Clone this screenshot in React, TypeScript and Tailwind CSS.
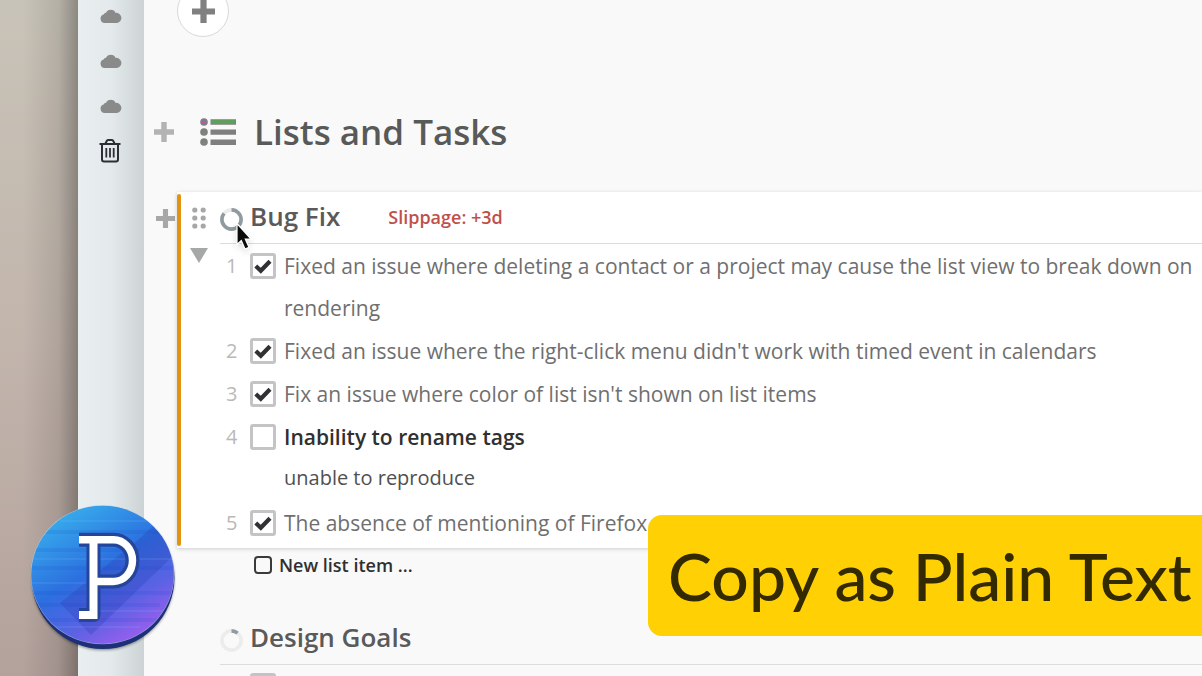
import React, { useState } from 'react';

interface ListItem {
  id: number;
  text: string;
  note?: string;
  done: boolean;
}

const initialItems: ListItem[] = [
  {
    id: 1,
    text: 'Fixed an issue where deleting a contact or a project may cause the list view to break down on rendering',
    done: true,
  },
  { id: 2, text: "Fixed an issue where the right-click menu didn't work with timed event in calendars", done: true },
  { id: 3, text: "Fix an issue where color of list isn't shown on list items", done: true },
  { id: 4, text: 'Inability to rename tags', note: 'unable to reproduce', done: false },
  { id: 5, text: 'The absence of mentioning of Firefox', done: true },
];

const CloudIcon = () => (
  <svg viewBox="0 0 22 14" className="w-[22px] h-[14px]" fill="#8a8a8a">
    <path d="M4.600 14A4.300 4.300 0 0 1 3.600 5.600 3.200 3.200 0 0 1 6 3.800 5.200 5.200 0 0 1 15.600 3.900 5 5 0 0 1 17 14z" />
  </svg>
);

const TrashIcon = () => (
  <svg viewBox="0 0 22 24" className="w-[22px] h-6" fill="none" stroke="#2c3035" strokeWidth="2">
    <path d="M0.500 5h21M3 5v15.500a2 2 0 0 0 2 2h12a2 2 0 0 0 2-2V5M6.500 4.500l1.200-2.500a1.500 1.500 0 0 1 1.300-.9h4a1.500 1.500 0 0 1 1.300.9l1.200 2.500" />
    <path d="M7.300 9v9.500M11 9v9.500M14.700 9v9.500" strokeWidth="1.800" />
  </svg>
);

const PlusIcon = ({ className }: { className: string }) => (
  <svg viewBox="0 0 20 20" className={className} fill="currentColor">
    <path d="M7.300 0h5.400v7.300H20v5.400h-7.300V20H7.300v-7.300H0V7.300h7.300z" />
  </svg>
);

const BulletsIcon = () => (
  <svg viewBox="0 0 36 28" className="w-9 h-7" fill="#7f7f7f">
    <circle cx="4" cy="4" r="3.800" />
    <circle cx="4" cy="14" r="3.800" />
    <circle cx="4" cy="24" r="3.800" />
    <path d="M10.500 1.300H36v5.400H10.500zM10.500 11.400H36v5.400H10.500zM10.500 21.500H36v5.400H10.500z" />
    <path d="M11.500 4h24" stroke="#3fc03f" strokeWidth="4" strokeDasharray="1 1" />
    <path d="M2 4.500h4" stroke="#c74fc0" strokeWidth="2" />
    <path d="M3 15.500h2.500M3 25.500h2.500" stroke="#4fae4f" strokeWidth="1.500" />
  </svg>
);

const DragHandleIcon = () => (
  <svg viewBox="0 0 14 22" className="w-[14px] h-[22px]" fill="#a6a8a8">
    {[3, 11, 19].map(y => (
      <g key={y}>
        <circle cx="2.800" cy={y} r="2.600" />
        <circle cx="11.200" cy={y} r="2.600" />
      </g>
    ))}
  </svg>
);

const ProgressRing = ({ percent }: { percent: number }) => (
  <svg viewBox="0 0 23 23" className="w-[23px] h-[23px] mt-[6px]" fill="none" strokeWidth="3.600">
    <circle cx="11.500" cy="11.500" r="9.600" stroke="#ececec" />
    <circle
      cx="11.500"
      cy="11.500"
      r="9.600"
      stroke="#909ba1"
      pathLength="100"
      strokeDasharray={`${percent} 100`}
      transform="rotate(-90 11.500 11.500)"
    />
  </svg>
);

const CursorIcon = () => (
  <svg viewBox="0 0 18 30" className="w-[18px] h-[30px] drop-shadow-md">
    <path
      d="M1 1.500v21l4.300-4 3.700 8.500 4-1.700-3.700-8.300h5.700z"
      fill="#0b0b0b"
      stroke="#fff"
      strokeWidth="1.200"
    />
  </svg>
);

const AppLogo = () => (
  <svg viewBox="0 0 146 148" className="w-[146px] h-[148px]">
    <defs>
      <linearGradient id="disc" x1="0.200" y1="0" x2="0.800" y2="1">
        <stop offset="0" stopColor="#38b2ec" />
        <stop offset="0.450" stopColor="#2c6fe0" />
        <stop offset="0.720" stopColor="#5b62e4" />
        <stop offset="1" stopColor="#a95df0" />
      </linearGradient>
      <clipPath id="discClip">
        <ellipse cx="72.500" cy="69.700" rx="71.200" ry="69" />
      </clipPath>
      <filter id="discShadow" x="-10%" y="-10%" width="120%" height="120%">
        <feGaussianBlur stdDeviation="1.500" />
      </filter>
    </defs>
    <circle cx="73" cy="74" r="71" fill="#000" opacity="0.450" filter="url(#discShadow)" />
    <circle cx="73" cy="72.500" r="71.500" fill="#1d2f78" />
    <ellipse cx="72.500" cy="69.700" rx="71.800" ry="69.600" fill="#b9d4f4" opacity="0.700" />
    <ellipse cx="72.500" cy="69.700" rx="71.200" ry="69" fill="url(#disc)" />
    <g clipPath="url(#discClip)">
      <path d="M30 98L61 130 146 48V0L108 35z" fill="#2b3bb0" opacity="0.280" />
      <path d="M0 27h146M0 45h110M0 63h146M0 88h146M0 100h130M10 115h130" stroke="#1747c0" strokeWidth="4" opacity="0.120" />
      <path d="M30 16h90M0 54h146M0 78h60M70 106h76M20 122h90" stroke="#7fc4ff" strokeWidth="2" opacity="0.130" />
    </g>
    <g fill="none">
      <path
        d="M49 34.700H83.500A19 20.900 0 0 1 83.500 76.500H64M63.500 34.700V110H49"
        stroke="#24459a"
        strokeWidth="14"
        strokeLinejoin="round"
      />
      <path d="M49 34.700H83.500A19 20.900 0 0 1 83.500 76.500H64" stroke="#fff" strokeWidth="7.400" />
      <path d="M63.500 31V110H49" stroke="#fff" strokeWidth="8" />
    </g>
  </svg>
);

interface CheckboxProps {
  id: string;
  checked: boolean;
  label?: string;
  onChange?: () => void;
}

const Checkbox: React.FC<CheckboxProps> = ({ id, checked, label, onChange }) => (
  <span className="grid w-[26px] h-[26px] mt-2 shrink-0">
    <input
      id={id}
      type="checkbox"
      aria-label={label}
      checked={checked}
      onChange={onChange}
      className="col-start-1 row-start-1 w-[26px] h-[26px] appearance-none rounded-[3px] border-3 border-[#c4c4c4] bg-white"
    />
    {checked && (
      <svg viewBox="0 0 26 26" className="col-start-1 row-start-1 pointer-events-none" fill="none">
        <path d="M5.800 13l5 4.800L20 8.300" stroke="#2f3133" strokeWidth="4.200" />
      </svg>
    )}
  </span>
);

const SectionHeader = ({ title, percent, slippage }: { title: string; percent: number; slippage?: string }) => (
  <div className="flex items-center h-[52px] pb-[2px] border-b border-[#dcdcdc]">
    <ProgressRing percent={percent} />
    <h2 className="ml-[7px] text-[26px] font-semibold text-[#5a5a5a]">{title}</h2>
    {slippage && <span className="ml-12 text-lg font-semibold text-[#c0504a]">{slippage}</span>}
  </div>
);

const Sidebar = () => (
  <nav className="w-[66px] shrink-0 flex flex-col items-center pt-[9px] bg-linear-to-r from-[#e9eff0] via-[#e4eaeb] to-[#ccd3d5]">
    <div className="flex flex-col gap-[31px]">
      <button aria-label="Cloud 1"><CloudIcon /></button>
      <button aria-label="Cloud 2"><CloudIcon /></button>
      <button aria-label="Cloud 3"><CloudIcon /></button>
    </div>
    <button aria-label="Trash" className="mt-[26px] mr-[2px]"><TrashIcon /></button>
  </nav>
);

const App: React.FC = () => {
  const [items, setItems] = useState<ListItem[]>(initialItems);
  const [goalDone, setGoalDone] = useState(false);

  const toggleItem = (id: number) => {
    setItems(items.map(item => (item.id === id ? { ...item, done: !item.done } : item)));
  };

  return (
    <div className="relative flex h-screen overflow-hidden bg-[#f9f9f9] font-['Open_Sans',sans-serif]">
      <div className="w-[78px] shrink-0 bg-linear-to-b from-[#c8c3b8] via-[#c2b5ac] to-[#b3a19b]">
        <div className="h-full bg-linear-to-r from-black/0 from-30% via-black/10 via-75% to-black/30" />
      </div>
      <Sidebar />

      <main className="flex-1 min-w-0">
        <button
          aria-label="Add"
          className="flex items-center justify-center w-[52px] h-[52px] -mt-[15px] ml-[33px] rounded-full border border-[#d9d9d9] bg-white text-[#808080]"
        >
          <PlusIcon className="w-[23px] h-[23px]" />
        </button>

        <div className="flex items-center h-[60px] mt-[65px] pl-[10px]">
          <button aria-label="Add section" className="text-[#b3b3b3]">
            <PlusIcon className="w-5 h-5" />
          </button>
          <span className="ml-[26px]"><BulletsIcon /></span>
          <h1 className="ml-[18px] text-[35px] font-semibold text-[#585a5a]">Lists and Tasks</h1>
        </div>

        <section className="flex mt-[30px]">
          <div className="w-[33px] shrink-0 pt-[17px] pl-3">
            <button aria-label="Add list" className="block text-[#a6a8a8]">
              <PlusIcon className="w-[19px] h-[19px]" />
            </button>
          </div>
          <div className="flex flex-1 min-w-0 bg-white shadow-[0_1px_4px_rgba(0,0,0,0.18)]">
            <div className="w-1 my-[2px] shrink-0 rounded-full bg-[#e2940f]" />
            <div className="flex flex-col items-center gap-[19px] w-[39px] shrink-0 pt-[15px] pr-1">
              <DragHandleIcon />
              <button aria-label="Collapse list">
                <svg viewBox="0 0 18 15" className="w-[18px] h-[15px]" fill="#a6a8a8">
                  <path d="M0 0h18L9 15z" />
                </svg>
              </button>
            </div>
            <div className="flex-1 min-w-0">
              <SectionHeader title="Bug Fix" percent={86} slippage="Slippage: +3d" />
              <ul className="flex flex-col gap-px pt-px pb-1">
                {items.map(item => (
                  <li key={item.id} className="flex">
                    <span className="w-[30px] shrink-0 pl-[6px] text-xl leading-[42px] text-[#b9b9b9]">{item.id}</span>
                    <Checkbox id={`item-${item.id}`} checked={item.done} onChange={() => toggleItem(item.id)} />
                    <div className="flex-1 min-w-0 pl-2">
                      <label
                        htmlFor={`item-${item.id}`}
                        className={`block text-[21px] leading-[42px] ${item.done ? 'text-[#6f6f6f]' : 'font-semibold text-[#303030]'}`}
                      >
                        {item.text}
                      </label>
                      {item.note && <p className="pb-[3px] text-xl leading-10 text-[#505050]">{item.note}</p>}
                    </div>
                  </li>
                ))}
              </ul>
            </div>
          </div>
        </section>

        <div className="flex items-center h-[34px] pl-[110px]">
          <input
            id="new-item"
            type="checkbox"
            className="w-[18px] h-[18px] appearance-none rounded-[4px] border-2 border-[#3a3a3a]"
          />
          <label htmlFor="new-item" className="pl-[7px] text-lg font-semibold text-[#303030]">New list item ...</label>
        </div>

        <section className="mt-[31px] pl-[76px]">
          <SectionHeader title="Design Goals" percent={11} />
          <div className="pl-[30px]">
            <Checkbox id="goal-1" checked={goalDone} label="Goal 1" onChange={() => setGoalDone(!goalDone)} />
          </div>
        </section>
      </main>

      <div className="absolute left-[236px] top-[222px] pointer-events-none">
        <CursorIcon />
      </div>
      <div className="absolute left-[30px] top-[505px]">
        <AppLogo />
      </div>
      <div className="absolute left-[648px] right-0 top-[515px] h-[121px] flex items-center pl-5 rounded-l-[14px] bg-[#ffd003] text-[#342a02]">
        <p className="font-['Lato',sans-serif] text-[66px] leading-none font-medium whitespace-nowrap">Copy as Plain Text</p>
      </div>
    </div>
  );
};

export default App;
